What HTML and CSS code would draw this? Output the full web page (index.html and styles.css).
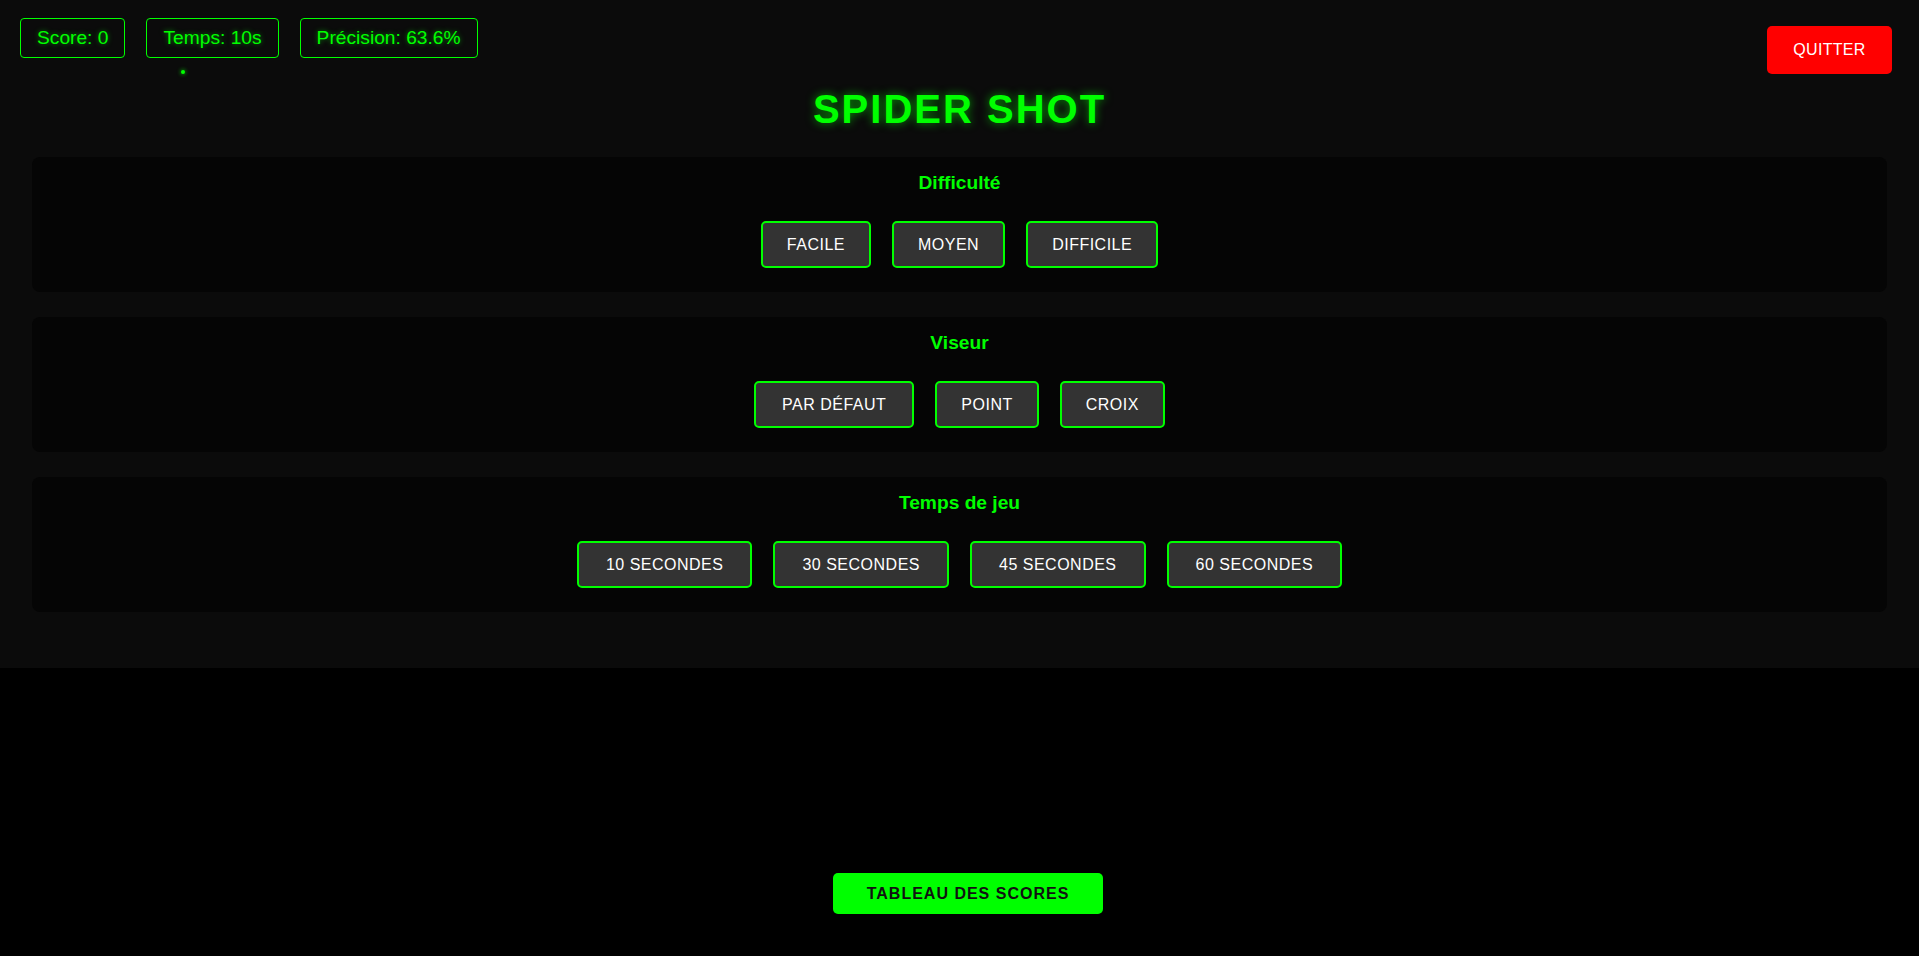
FILE: index.html
```html
<!DOCTYPE html>
<html lang="fr">
<head>
<meta charset="utf-8">
<title>Spider Shot</title>
<link rel="stylesheet" href="styles.css">
</head>
<body>
<div class="game">
  <div class="topbar">
    <div class="stats">
      <div class="stat">Score: 0</div>
      <div class="stat">Temps: 10s</div>
      <div class="stat">Précision: 63.6%</div>
    </div>
    <button class="quit">QUITTER</button>
  </div>
  <span class="cursor-dot"></span>
  <h1 class="title">SPIDER SHOT</h1>
  <section class="panel">
    <h3 class="panel-title">Difficulté</h3>
    <div class="options">
      <button class="opt">FACILE</button>
      <button class="opt">MOYEN</button>
      <button class="opt">DIFFICILE</button>
    </div>
  </section>
  <section class="panel">
    <h3 class="panel-title">Viseur</h3>
    <div class="options">
      <button class="opt wide">PAR DÉFAUT</button>
      <button class="opt">POINT</button>
      <button class="opt">CROIX</button>
    </div>
  </section>
  <section class="panel">
    <h3 class="panel-title">Temps de jeu</h3>
    <div class="options">
      <button class="opt time">10 SECONDES</button>
      <button class="opt time">30 SECONDES</button>
      <button class="opt time">45 SECONDES</button>
      <button class="opt time">60 SECONDES</button>
    </div>
  </section>
</div>
<div class="footer">
  <button class="scores">TABLEAU DES SCORES</button>
</div>
</body>
</html>
```
FILE: styles.css
```css
* { box-sizing: border-box; }
html, body { margin: 0; padding: 0; }
body {
  background: #000;
  font-family: "Liberation Sans", Arial, sans-serif;
  color: #00ff00;
  height: 956px;
  overflow: hidden;
}
.game {
  position: relative;
  background: #0b0b0b;
  height: 668px;
  padding: 18px 32px 0 32px;
}
.topbar {
  display: flex;
  justify-content: space-between;
  align-items: flex-start;
  margin: 0 -5px 0 -12px;
}
.stats {
  display: flex;
  gap: 21px;
}
.stat {
  border: 1px solid #00ff00;
  border-radius: 4px;
  padding: 8px 16px;
  height: 40px;
  font-size: 19.2px;
  line-height: 22px;
  color: #00ff00;
  text-shadow: 0 0 5px rgba(0, 255, 0, 0.5);
}
.quit {
  margin-top: 8px;
  background: #ff0000;
  color: #fff;
  border: none;
  border-radius: 5px;
  width: 125px;
  height: 48px;
  font-family: "Liberation Sans", Arial, sans-serif;
  font-size: 16px;
  letter-spacing: 0.3px;
  padding: 0;
}
.cursor-dot {
  position: absolute;
  left: 181px;
  top: 70px;
  width: 4px;
  height: 4px;
  border-radius: 50%;
  background: #00ff00;
  box-shadow: 0 0 4px #00ff00;
}
.title {
  margin: 12px 0 25px;
  text-align: center;
  font-size: 40px;
  line-height: 46px;
  font-weight: bold;
  letter-spacing: 2px;
  color: #00ff00;
  text-shadow: 0 0 10px rgba(0, 255, 0, 0.6);
}
.panel {
  background: #050505;
  border-radius: 8px;
  height: 135px;
  margin-bottom: 25px;
  padding: 15px 20px 0;
  text-align: center;
}
.panel-title {
  margin: 0 0 27px;
  font-size: 19.2px;
  line-height: 22px;
  font-weight: bold;
  color: #00ff00;
}
.options {
  display: flex;
  justify-content: center;
  gap: 21px;
}
.opt {
  background: #333;
  color: #fff;
  border: 2px solid #00ff00;
  border-radius: 5px;
  padding: 12px 24px;
  font-family: "Liberation Sans", Arial, sans-serif;
  font-size: 16px;
  line-height: 19px;
  letter-spacing: 0.5px;
}
.opt.wide {
  padding: 12px 26px;
}
.opt.time {
  padding: 12px 27px;
}
.footer {
  display: flex;
  justify-content: center;
  padding: 205px 0 0 17px;
}
.scores {
  background: #00ff00;
  color: #111;
  border: none;
  border-radius: 5px;
  padding: 11px 34px;
  font-family: "Liberation Sans", Arial, sans-serif;
  font-size: 16px;
  line-height: 19px;
  font-weight: bold;
  letter-spacing: 1px;
}
```
